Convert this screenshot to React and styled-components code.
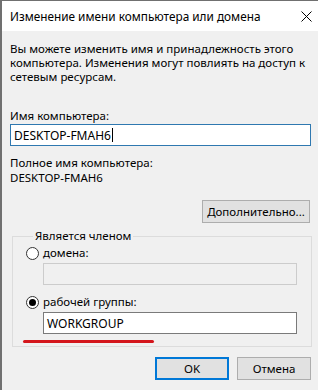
import React from "react";
import styled, { createGlobalStyle } from "styled-components";

const GlobalStyle = createGlobalStyle`
    html, body {
        margin: 0;
        padding: 0;
        background: #f0f0f0;
    }
    body {
        font-family: "Noto Sans", "Liberation Sans", sans-serif;
        font-size: 11.5px;
        color: #000;
    }
`

const Window = styled.div`
    width : 316px;
    height : 389px;
    border-left : 2px solid #707070;
    border-top : 1px solid #707070;
    background : #f0f0f0;
    display : flex;
    flex-direction : column;
    overflow : hidden;
`

const TitleBar = styled.div`
    height : 30px;
    background : #fff;
    display : flex;
    align-items : center;
    justify-content : space-between;
    padding : 0 6px 0 8px;
    font-size : 11.8px;
`

const Body = styled.div`
    padding : 11px 7px 0 8px;
    display : flex;
    flex-direction : column;
`

const Text = styled.div`
    line-height : 14px;
    margin-top : ${(p) => p.$mt || 0}px;
    white-space : nowrap;
`

const TextBox = styled.div`
    box-sizing : border-box;
    height : 22px;
    margin-top : ${(p) => p.$mt || 0}px;
    margin-left : ${(p) => p.$ml || 0}px;
    width : ${(p) => p.$w ? p.$w + "px" : "auto"};
    border : 1px solid ${(p) => p.$focus ? "#2f78b0" : p.$disabled ? "#cccccc" : "#7a7a7a"};
    background : ${(p) => p.$disabled ? "#f0f0f0" : "#fff"};
    padding : 0 3px;
    display : flex;
    align-items : center;
    font-size : 12px;
`

const Caret = styled.span`
    display : inline-block;
    width : 1px;
    height : 14px;
    background : #000;
    margin-left : 1px;
`

const Button = styled.button`
    box-sizing : border-box;
    height : 23px;
    width : ${(p) => p.$w}px;
    background : #e1e1e1;
    border : 1px solid ${(p) => p.$default ? "#0078d7" : "#adadad"};
    box-shadow : ${(p) => p.$default ? "inset 0 0 0 1px #0078d7" : "none"};
    font : inherit;
    color : #000;
    padding : 0;
    margin : 0;
`

const MoreRow = styled.div`
    display : flex;
    justify-content : flex-end;
    margin-top : 15px;
    padding-right : 1px;
`

const Group = styled.fieldset`
    position : relative;
    margin : 6px -1px 0 2px;
    padding : 3px 0 12px 13px;
    border : 1px solid #dcdcdc;
    min-width : 0;
`

const Legend = styled.legend`
    padding : 0 2px;
    margin-left : 7px;
    line-height : 14px;
`

const RadioRow = styled.div`
    display : flex;
    align-items : center;
    gap : 4px;
    line-height : 14px;
    margin-top : ${(p) => p.$mt || 0}px;
`

const Radio = styled.span`
    box-sizing : border-box;
    width : 13px;
    height : 13px;
    border-radius : 50%;
    border : 1px solid #333;
    background : #fff;
    display : flex;
    align-items : center;
    justify-content : center;
    &::after {
        content : "";
        width : 7px;
        height : 7px;
        border-radius : 50%;
        background : ${(p) => p.$checked ? "#000" : "transparent"};
    }
`

const RedMark = styled.div`
    position : absolute;
    left : 10px;
    top : 97px;
    width : 131px;
    height : 3px;
    border-radius : 2px;
    background : #d4161c;
`

const Footer = styled.div`
    display : flex;
    justify-content : flex-end;
    gap : 8px;
    margin-top : 10px;
`

const CloseIcon = () => (
    <svg width="11" height="11" viewBox="0 0 11 11">
        <path d="M0.5 0.5 L10.5 10.5 M10.5 0.5 L0.5 10.5" stroke="#000" strokeWidth="1" fill="none" />
    </svg>
);

const App = () => {
    return (
        <>
            <GlobalStyle />
            <Window>
                <TitleBar>
                    <span>Изменение имени компьютера или домена</span>
                    <CloseIcon />
                </TitleBar>
                <Body>
                    <Text>Вы можете изменить имя и принадлежность этого</Text>
                    <Text>компьютера. Изменения могут повлиять на доступ к</Text>
                    <Text>сетевым ресурсам.</Text>
                    <Text $mt={25}>Имя компьютера:</Text>
                    <TextBox $mt={1} $focus>
                        DESKTOP-FMAH6<Caret />
                    </TextBox>
                    <Text $mt={10}>Полное имя компьютера:</Text>
                    <Text $mt={1}>DESKTOP-FMAH6</Text>
                    <MoreRow>
                        <Button $w={108}>Дополнительно...</Button>
                    </MoreRow>
                    <Group>
                        <Legend>Является членом</Legend>
                        <RadioRow>
                            <Radio />
                            <span>домена:</span>
                        </RadioRow>
                        <TextBox $mt={3} $ml={17} $w={254} $disabled />
                        <RadioRow $mt={10}>
                            <Radio $checked />
                            <span>рабочей группы:</span>
                        </RadioRow>
                        <TextBox $mt={3} $ml={17} $w={254}>WORKGROUP</TextBox>
                        <RedMark />
                    </Group>
                    <Footer>
                        <Button $w={74} $default>OK</Button>
                        <Button $w={74}>Отмена</Button>
                    </Footer>
                </Body>
            </Window>
        </>
    );
};

export default App;
